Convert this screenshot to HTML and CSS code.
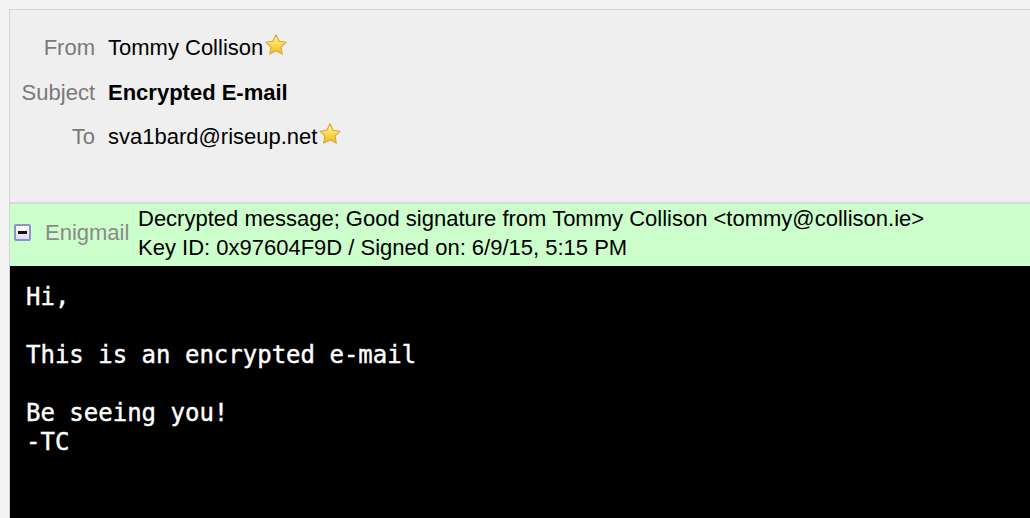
FILE: index.html
```html
<!DOCTYPE html>
<html>
<head>
<meta charset="utf-8">
<link rel="stylesheet" href="styles.css">
</head>
<body>
<div class="page">
  <div class="panel">
    <div class="header">
      <div class="label">From</div>
      <div class="value">Tommy Collison<svg class="star" viewBox="0 0 24 24" width="24" height="24"><defs><linearGradient id="g1" x1="0" y1="0" x2="0" y2="1"><stop offset="0" stop-color="#fff6b0"/><stop offset="0.55" stop-color="#ffd84a"/><stop offset="1" stop-color="#f2b52a"/></linearGradient></defs><path d="M12 1.8l3.1 6.5 7 .9-5.1 4.9 1.3 7-6.3-3.4-6.3 3.4 1.3-7L1.9 9.2l7-.9z" fill="url(#g1)" stroke="#d9a43a" stroke-width="1.1" stroke-linejoin="round"/></svg></div>
      <div class="label">Subject</div>
      <div class="value bold">Encrypted E-mail</div>
      <div class="label">To</div>
      <div class="value">sva1bard@riseup.net<svg class="star" viewBox="0 0 24 24" width="24" height="24"><path d="M12 1.8l3.1 6.5 7 .9-5.1 4.9 1.3 7-6.3-3.4-6.3 3.4 1.3-7L1.9 9.2l7-.9z" fill="url(#g1)" stroke="#d9a43a" stroke-width="1.1" stroke-linejoin="round"/></svg></div>
    </div>
    <div class="enigmail">
      <div class="toggle"><span class="minus"></span></div>
      <div class="eni-label">Enigmail</div>
      <div class="eni-text">
        <div>Decrypted message; Good signature from Tommy Collison &lt;tommy@collison.ie&gt;</div>
        <div>Key ID: 0x97604F9D / Signed on: 6/9/15, 5:15 PM</div>
      </div>
    </div>
    <pre class="body">Hi,

This is an encrypted e-mail

Be seeing you!
-TC</pre>
  </div>
</div>
</body>
</html>
```

FILE: styles.css
```css
html, body {
  margin: 0;
  padding: 0;
  height: 100%;
}
body {
  background: #f3f3f3;
  font-family: "Liberation Sans", Arial, sans-serif;
  overflow: hidden;
}
.page {
  padding: 9px 0 0 9px;
  height: 100%;
  box-sizing: border-box;
}
.panel {
  border-left: 1px solid #d4d4d4;
  border-top: 1px solid #d4d4d4;
  background: #efefef;
  height: 100%;
  display: flex;
  flex-direction: column;
}
.header {
  display: grid;
  grid-template-columns: 85px auto;
  column-gap: 13px;
  align-content: start;
  padding-top: 16px;
  height: 194px;
  box-sizing: border-box;
  border-bottom: 2px solid #d9d9d9;
  font-size: 22px;
  line-height: 44.5px;
}
.label {
  text-align: right;
  color: #7a7a7a;
}
.value {
  color: #000;
  display: flex;
  align-items: center;
}
.bold {
  font-weight: bold;
}
.star {
  margin-left: 1px;
  margin-top: -6px;
}
.enigmail {
  background: #ccffcc;
  display: flex;
  align-items: center;
  height: 62px;
  box-sizing: border-box;
  font-size: 22px;
}
.toggle {
  width: 17px;
  height: 17px;
  margin-left: 4px;
  margin-top: -6px;
  box-sizing: border-box;
  border: 2px solid #8d8fd8;
  border-radius: 2px;
  background: linear-gradient(#ffffff, #dcdcec);
  display: flex;
  align-items: center;
  justify-content: center;
}
.minus {
  width: 9px;
  height: 3px;
  background: #111;
}
.eni-label {
  color: #8a8a8a;
  margin-left: 14px;
  margin-top: -4px;
  width: 93px;
}
.eni-text {
  line-height: 29px;
  color: #000;
  margin-top: -4px;
}
.body {
  flex: 1;
  margin: 0;
  background: #000;
  color: #fff;
  font-family: "DejaVu Sans Mono", monospace;
  font-size: 24px;
  line-height: 29px;
  padding: 17px 16px;
  -webkit-text-stroke: 0.4px #fff;
}
```
